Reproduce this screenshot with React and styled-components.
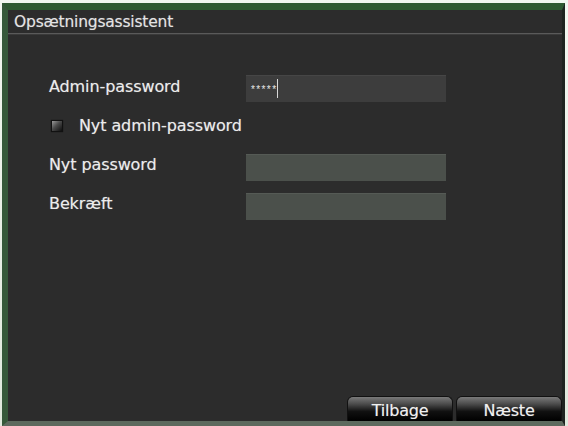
import styled, { createGlobalStyle } from 'styled-components';

const Global = createGlobalStyle`
  html, body {
    margin: 0;
    padding: 0;
    background: #e6eee6;
  }
  body {
    font-family: "DejaVu Sans", "Liberation Sans", Arial, sans-serif;
  }
`;

const Screen = styled.div`
  width: 568px;
  height: 426px;
  box-sizing: border-box;
  padding: 3px 3px 0 2px;
  background: linear-gradient(#f2f7f0, #dfe8dc);
`;

const Frame = styled.div`
  height: 100%;
  box-sizing: border-box;
  border-top: 7px solid #2f5a32;
  border-left: 6px solid #36593a;
  border-right: 3px solid #1e2420;
  border-bottom: 5px solid #5d6a5e;
  background: #2c2c2c;
  display: flex;
  flex-direction: column;
`;

const TitleBar = styled.div`
  height: 23px;
  display: flex;
  align-items: center;
  padding-left: 6px;
  border-bottom: 1px solid #5a5a5a;
  box-shadow: 0 1px 0 #3a3a3a;
  color: #e4e4e4;
  font-size: 15.5px;
  letter-spacing: -0.2px;
  text-shadow: 0 0 1px rgba(255, 255, 255, 0.35);
`;

const Body = styled.div`
  flex: 1;
  display: flex;
  flex-direction: column;
  padding: 41px 0 0 41px;
`;

const Row = styled.div`
  display: grid;
  grid-template-columns: 197px 200px;
  align-items: center;
  height: ${p => p.$h || 28}px;
  margin-bottom: ${p => p.$gap || 0}px;
`;

const Label = styled.span`
  color: #ececec;
  font-size: 16px;
  letter-spacing: -0.1px;
  text-shadow: 0 0 1px rgba(255, 255, 255, 0.4);
`;

const RowLabel = styled(Label)`
  padding-bottom: 5px;
`;

const Field = styled.div`
  height: 27px;
  display: flex;
  align-items: center;
  padding-left: 5px;
  background: ${p => (p.$active ? '#3d3d3d' : '#4b504b')};
  box-shadow: inset 0 1px 0 ${p => (p.$active ? '#464646' : '#555a55')};
`;

const Stars = styled.span`
  color: #e8e8e8;
  font-family: "Liberation Sans", Arial, sans-serif;
  font-size: 10px;
  letter-spacing: 1.4px;
  padding-top: 2px;
`;

const Caret = styled.span`
  width: 1px;
  height: 19px;
  background: #d8d8d8;
`;

const CheckRow = styled.div`
  display: flex;
  align-items: center;
  height: 25px;
  margin-bottom: 15px;
  padding-left: 3px;
`;

const Box = styled.span`
  width: 10px;
  height: 10px;
  margin-right: 17px;
  background: linear-gradient(135deg, #9a9a9a 0%, #4a4a4a 45%, #0d0d0d 100%);
  box-shadow: 0 0 1px 1px rgba(0, 0, 0, 0.6);
`;

const Footer = styled.div`
  margin-top: auto;
  display: flex;
  justify-content: flex-end;
  gap: 3px;
`;

const Button = styled.button`
  width: 106px;
  height: 25px;
  border: 1px solid #111;
  border-bottom: none;
  border-radius: 6px 6px 0 0;
  background: linear-gradient(#7a7a7a 0%, #4a4a4a 30%, #111 60%, #000 100%);
  color: #f0f0f0;
  font-family: "DejaVu Sans", "Liberation Sans", Arial, sans-serif;
  font-size: 16px;
  letter-spacing: -0.2px;
  text-shadow: 0 0 1px rgba(255, 255, 255, 0.4);
  padding: 2px 0 0;
  cursor: pointer;
`;

export default function App() {
  return (
    <>
      <Global />
      <Screen>
        <Frame>
          <TitleBar>Opsætningsassistent</TitleBar>
          <Body>
            <Row $h={27} $gap={11}>
              <RowLabel>Admin-password</RowLabel>
              <Field $active>
                <Stars>*****</Stars>
                <Caret />
              </Field>
            </Row>
            <CheckRow>
              <Box />
              <Label>Nyt admin-password</Label>
            </CheckRow>
            <Row $h={28} $gap={11}>
              <RowLabel>Nyt password</RowLabel>
              <Field />
            </Row>
            <Row $h={28}>
              <RowLabel>Bekræft</RowLabel>
              <Field />
            </Row>
          </Body>
          <Footer>
            <Button>Tilbage</Button>
            <Button>Næste</Button>
          </Footer>
        </Frame>
      </Screen>
    </>
  );
}
